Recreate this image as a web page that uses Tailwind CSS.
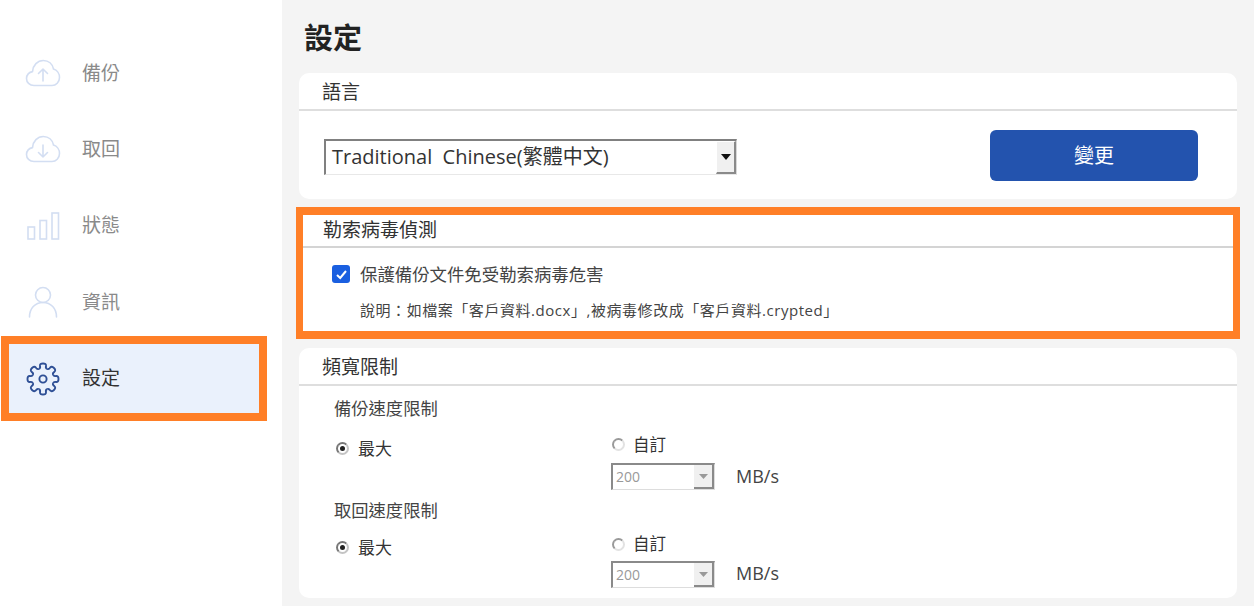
<!DOCTYPE html>
<html lang="zh-Hant">
<head>
  <meta charset="UTF-8" />
  <title>設定</title>
  <script src="https://cdn.jsdelivr.net/npm/@tailwindcss/browser@4"></script>
</head>
<body class="w-[1254px] h-[606px] overflow-hidden flex bg-[#f4f4f4] text-[#333] font-['Open_Sans','Noto_Sans_CJK_TC',sans-serif]">

  <!-- Sidebar -->
  <aside class="w-[282px] h-full bg-white pt-[35px] shrink-0 text-[19px] text-[#8a8a8a]">
    <div class="h-[76.3px] flex items-center pl-[25px]">
      <svg class="w-[36px] h-[28px]" viewBox="0 0 36 28" fill="none" stroke="#d3def2" stroke-width="1.6" stroke-linecap="round" stroke-linejoin="round"><path d="M9 26.5C4.5 26.5 1.5 23.3 1.5 19.5C1.5 16 4 13 7.5 12.6C8 6.2 12.5 1.5 18.3 1.5C23.5 1.5 27.5 5 28.5 10C32 11 34.5 14.5 34.5 18.5C34.5 23 31 26.5 27 26.5Z"/><path d="M18 22V10M13.5 14.5L18 10L22.5 14.5"/></svg>
      <span class="ml-[21px]">備份</span>
    </div>
    <div class="h-[76.3px] flex items-center pl-[25px]">
      <svg class="w-[36px] h-[28px]" viewBox="0 0 36 28" fill="none" stroke="#d3def2" stroke-width="1.6" stroke-linecap="round" stroke-linejoin="round"><path d="M9 26.5C4.5 26.5 1.5 23.3 1.5 19.5C1.5 16 4 13 7.5 12.6C8 6.2 12.5 1.5 18.3 1.5C23.5 1.5 27.5 5 28.5 10C32 11 34.5 14.5 34.5 18.5C34.5 23 31 26.5 27 26.5Z"/><path d="M18 10V22M13.5 17.5L18 22L22.5 17.5"/></svg>
      <span class="ml-[21px]">取回</span>
    </div>
    <div class="h-[76.3px] flex items-center pl-[25px]">
      <svg class="w-[36px] h-[28px]" viewBox="0 0 36 28" fill="none" stroke="#d3def2" stroke-width="1.6"><rect x="3" y="15" width="6.5" height="12"/><rect x="15" y="8.5" width="6.5" height="18.5"/><rect x="27" y="1" width="6.5" height="26"/></svg>
      <span class="ml-[21px]">狀態</span>
    </div>
    <div class="h-[76.3px] flex items-center pl-[25px]">
      <svg class="w-[36px] h-[32px]" viewBox="0 0 36 32" fill="none" stroke="#d3def2" stroke-width="1.6" stroke-linecap="round"><circle cx="18" cy="9" r="7.5"/><path d="M4.5 31C4.5 22.5 10 16.5 18 16.5C26 16.5 31.5 22.5 31.5 31"/></svg>
      <span class="ml-[21px]">資訊</span>
    </div>
    <div class="h-[85px] -mt-[4px] ml-[1px] w-[266px] border-[8px] border-[#ff7f27] bg-[#eaf1fc] flex items-center pl-[17px] text-[#333]">
      <svg class="w-[34px] h-[34px]" viewBox="0 0 34 34" fill="none" stroke="#2f5096" stroke-width="1.9" stroke-linejoin="round">
        <path id="cog" d="M12.79 6.84Q14.6 6.2 14 3.9Q13.8 1.5 17 1.5Q20.2 1.5 20 3.9Q19.4 6.2 21.21 6.84"/>
        <use href="#cog" transform="rotate(45 17 17)"/>
        <use href="#cog" transform="rotate(90 17 17)"/>
        <use href="#cog" transform="rotate(135 17 17)"/>
        <use href="#cog" transform="rotate(180 17 17)"/>
        <use href="#cog" transform="rotate(225 17 17)"/>
        <use href="#cog" transform="rotate(270 17 17)"/>
        <use href="#cog" transform="rotate(315 17 17)"/>
        <circle cx="17" cy="17" r="3.6"/>
      </svg>
      <span class="ml-[22px]">設定</span>
    </div>
  </aside>

  <!-- Main -->
  <main class="flex-1 pl-[17px] pr-[17px] min-w-0">
    <h1 class="h-[73px] pt-[16px] pl-[5px] text-[29px] leading-[44px] font-bold text-[#222]">設定</h1>

    <!-- 語言 -->
    <section class="h-[126px] bg-white rounded-[10px]">
      <h2 class="h-[38px] pl-[23px] text-[19px] leading-[39px] border-b-2 border-[#dedede]">語言</h2>
      <div class="flex items-start pl-[25px] pt-[28px]">
        <div class="w-[413px] h-[36px] flex border-t-2 border-l-2 border-[#808080] border-b border-r border-b-[#e8e8e8] border-r-[#d8d8d8]">
          <span class="flex-1 pl-[6px] text-[20px] leading-[31px] whitespace-pre">Traditional  Chinese(繁體中文)</span>
          <span class="w-[20px] h-[33px] flex items-center justify-center bg-[#f0f0f0] border-b-2 border-r-2 border-[#8a8a8a] border-t border-l border-t-[#fff] border-l-[#fff]">
            <svg class="w-[10px] h-[6px]" viewBox="0 0 10 6"><path d="M0 0H10L5 6Z" fill="#111"/></svg>
          </span>
        </div>
        <button class="ml-[253px] -mt-[9px] w-[208px] h-[51px] bg-[#2353ae] rounded-[6px] text-white text-[20px]">變更</button>
      </div>
    </section>

    <!-- 勒索病毒偵測 -->
    <section class="-mx-[3px] mt-[8px] h-[132px] border-[8px] border-x-[7px] border-[#ff7f27] bg-white">
      <h2 class="h-[33px] pl-[20px] text-[19px] leading-[30px] border-b-2 border-[#d4d4d4]">勒索病毒偵測</h2>
      <label class="flex items-center pl-[29px] pt-[16px] text-[17.4px] leading-[20px] text-[#444]">
        <span class="w-[18px] h-[18px] rounded-[3px] bg-[#1a5fe0] flex items-center justify-center">
          <svg class="w-[13px] h-[13px]" viewBox="0 0 13 13" fill="none" stroke="#fff" stroke-width="2"><path d="M2 7L5.2 10L11 3"/></svg>
        </span>
        <span class="ml-[10px]">保護備份文件免受勒索病毒危害</span>
      </label>
      <p class="pl-[57px] mt-[16px] text-[15px] leading-[20px] tracking-[0.55px] text-[#444] whitespace-nowrap">說明：如檔案「客戶資料.docx」,被病毒修改成「客戶資料.crypted」</p>
    </section>

    <!-- 頻寬限制 -->
    <section class="mt-[9px] h-[250px] bg-white rounded-[10px]">
      <h2 class="h-[38px] pl-[23px] text-[19px] leading-[39px] border-b-2 border-[#dedede]">頻寬限制</h2>

      <div class="pl-[35px] pt-[12px]">
        <p class="text-[17.3px] leading-[22px] text-[#444]">備份速度限制</p>
        <div class="flex mt-[15px]">
          <div class="w-[277px] flex items-center h-[24px] pt-[4px]">
            <span class="w-[13px] h-[13px] ml-[2px] -mt-[2px] rounded-full border-2 border-[#c4c4c4] border-t-[#777] border-l-[#777] bg-white flex items-center justify-center"><span class="w-[5px] h-[5px] rounded-full bg-[#222]"></span></span>
            <span class="ml-[9px] text-[17px] leading-[22px]">最大</span>
          </div>
          <div>
            <div class="flex items-center h-[20px] -mt-[1px]">
              <span class="w-[13px] h-[13px] ml-[1px] rounded-full border-2 border-[#e2e2e2] border-t-[#999] border-l-[#999] bg-white"></span>
              <span class="ml-[8px] pt-[2px] text-[16.5px] leading-[20px]">自訂</span>
            </div>
            <div class="flex items-center mt-[9px]">
              <div class="w-[104px] h-[27px] flex border-t-2 border-l-2 border-[#8a8a8a] bg-white border-b border-r border-b-[#ddd] border-r-[#ddd]">
                <span class="flex-1 pl-[3px] text-[14px] leading-[24px] text-[#999]">200</span>
                <span class="w-[20px] bg-[#f0f0f0] border-r-2 border-b-2 border-[#8a8a8a] flex items-center justify-center"><svg class="w-[9px] h-[5px]" viewBox="0 0 9 5"><path d="M0 0H9L4.5 5Z" fill="#999"/></svg></span>
              </div>
              <span class="ml-[21px] text-[18px] text-[#444]">MB/s</span>
            </div>
          </div>
        </div>

        <p class="mt-[10px] text-[17.3px] leading-[22px] text-[#444]">取回速度限制</p>
        <div class="flex mt-[14px]">
          <div class="w-[277px] flex items-center h-[24px]">
            <span class="w-[13px] h-[13px] ml-[2px] -mt-[2px] rounded-full border-2 border-[#c4c4c4] border-t-[#777] border-l-[#777] bg-white flex items-center justify-center"><span class="w-[5px] h-[5px] rounded-full bg-[#222]"></span></span>
            <span class="ml-[9px] text-[17px] leading-[22px]">最大</span>
          </div>
          <div>
            <div class="flex items-center h-[20px] -mt-[2px]">
              <span class="w-[13px] h-[13px] ml-[1px] rounded-full border-2 border-[#e2e2e2] border-t-[#999] border-l-[#999] bg-white"></span>
              <span class="ml-[8px] text-[16.5px] leading-[20px]">自訂</span>
            </div>
            <div class="flex items-center mt-[7px]">
              <div class="w-[104px] h-[27px] flex border-t-2 border-l-2 border-[#8a8a8a] bg-white border-b border-r border-b-[#ddd] border-r-[#ddd]">
                <span class="flex-1 pl-[3px] text-[14px] leading-[24px] text-[#999]">200</span>
                <span class="w-[20px] bg-[#f0f0f0] border-r-2 border-b-2 border-[#8a8a8a] flex items-center justify-center"><svg class="w-[9px] h-[5px]" viewBox="0 0 9 5"><path d="M0 0H9L4.5 5Z" fill="#999"/></svg></span>
              </div>
              <span class="ml-[21px] -mt-[2px] text-[18px] text-[#444]">MB/s</span>
            </div>
          </div>
        </div>
      </div>
    </section>
  </main>
</body>
</html>
